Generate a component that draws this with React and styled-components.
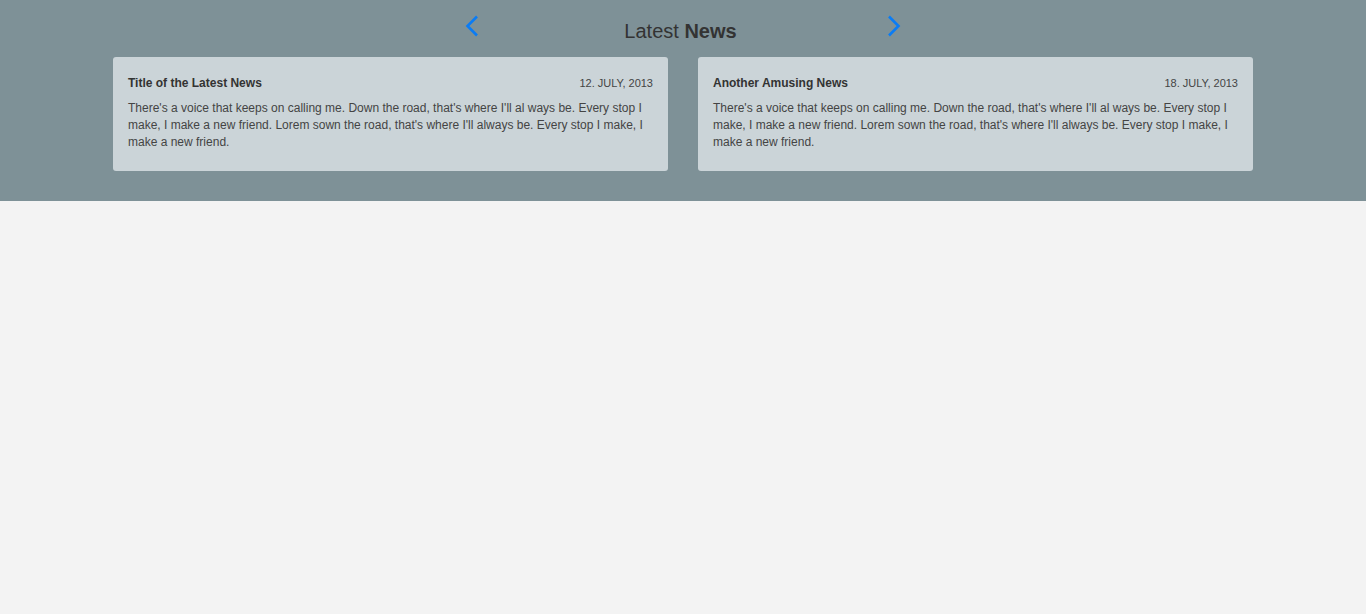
import React from "react";
import styled, { createGlobalStyle } from "styled-components";

const Global = createGlobalStyle`
  html, body { margin: 0; padding: 0; }
  body {
    background: #f3f3f3;
    font-family: "Liberation Sans", Arial, sans-serif;
    color: #333;
  }
`;

const Band = styled.section`
  background: #7e9197;
  padding: 0 0 30px;
`;

const HeadRow = styled.div`
  width: 436px;
  height: 57px;
  margin: 0 auto;
  display: flex;
  justify-content: space-between;
  align-items: flex-start;
`;

const ArrowBtn = styled.button`
  margin-top: 15px;
  padding: 0;
  border: 0;
  background: none;
  width: 14px;
  height: 22px;
  cursor: pointer;
  display: flex;
`;

const Heading = styled.h2`
  margin: 19px 5px 0 0;
  font-size: 20px;
  line-height: 24px;
  font-weight: normal;
  color: #333;
  b { font-weight: bold; }
`;

const Cards = styled.div`
  width: 1140px;
  margin: 0 auto;
  display: grid;
  grid-template-columns: 1fr 1fr;
  gap: 30px;
`;

const Card = styled.article`
  background: #cbd4d8;
  border-radius: 3px;
  padding: 16px 15px 20px;
`;

const CardHead = styled.div`
  display: flex;
  justify-content: space-between;
  align-items: baseline;
  line-height: 20px;
`;

const CardTitle = styled.h3`
  margin: 0;
  font-size: 12px;
  font-weight: bold;
  color: #333;
`;

const CardDate = styled.span`
  font-size: 11px;
  color: #444;
`;

const CardText = styled.p`
  margin: 7px 0 0;
  font-size: 12px;
  line-height: 17px;
  color: #444;
`;

const Chevron = ({ dir }) => (
  <svg width="14" height="22" viewBox="0 0 14 22" fill="none">
    <polyline
      points={dir === "left" ? "12,1.5 2.5,11 12,20.5" : "2,1.5 11.5,11 2,20.5"}
      stroke="#0a7cf5"
      strokeWidth="2.6"
      strokeLinecap="butt"
      strokeLinejoin="miter"
    />
  </svg>
);

const text =
  "There's a voice that keeps on calling me. Down the road, that's where I'll al ways be. Every stop I make, I make a new friend. Lorem sown the road, that's where I'll always be. Every stop I make, I make a new friend.";

const news = [
  { title: "Title of the Latest News", date: "12. JULY, 2013" },
  { title: "Another Amusing News", date: "18. JULY, 2013" },
];

export default function App() {
  return (
    <>
      <Global />
      <Band>
        <HeadRow>
          <ArrowBtn aria-label="previous">
            <Chevron dir="left" />
          </ArrowBtn>
          <Heading>
            Latest <b>News</b>
          </Heading>
          <ArrowBtn aria-label="next">
            <Chevron dir="right" />
          </ArrowBtn>
        </HeadRow>
        <Cards>
          {news.map((n) => (
            <Card key={n.title}>
              <CardHead>
                <CardTitle>{n.title}</CardTitle>
                <CardDate>{n.date}</CardDate>
              </CardHead>
              <CardText>{text}</CardText>
            </Card>
          ))}
        </Cards>
      </Band>
    </>
  );
}
